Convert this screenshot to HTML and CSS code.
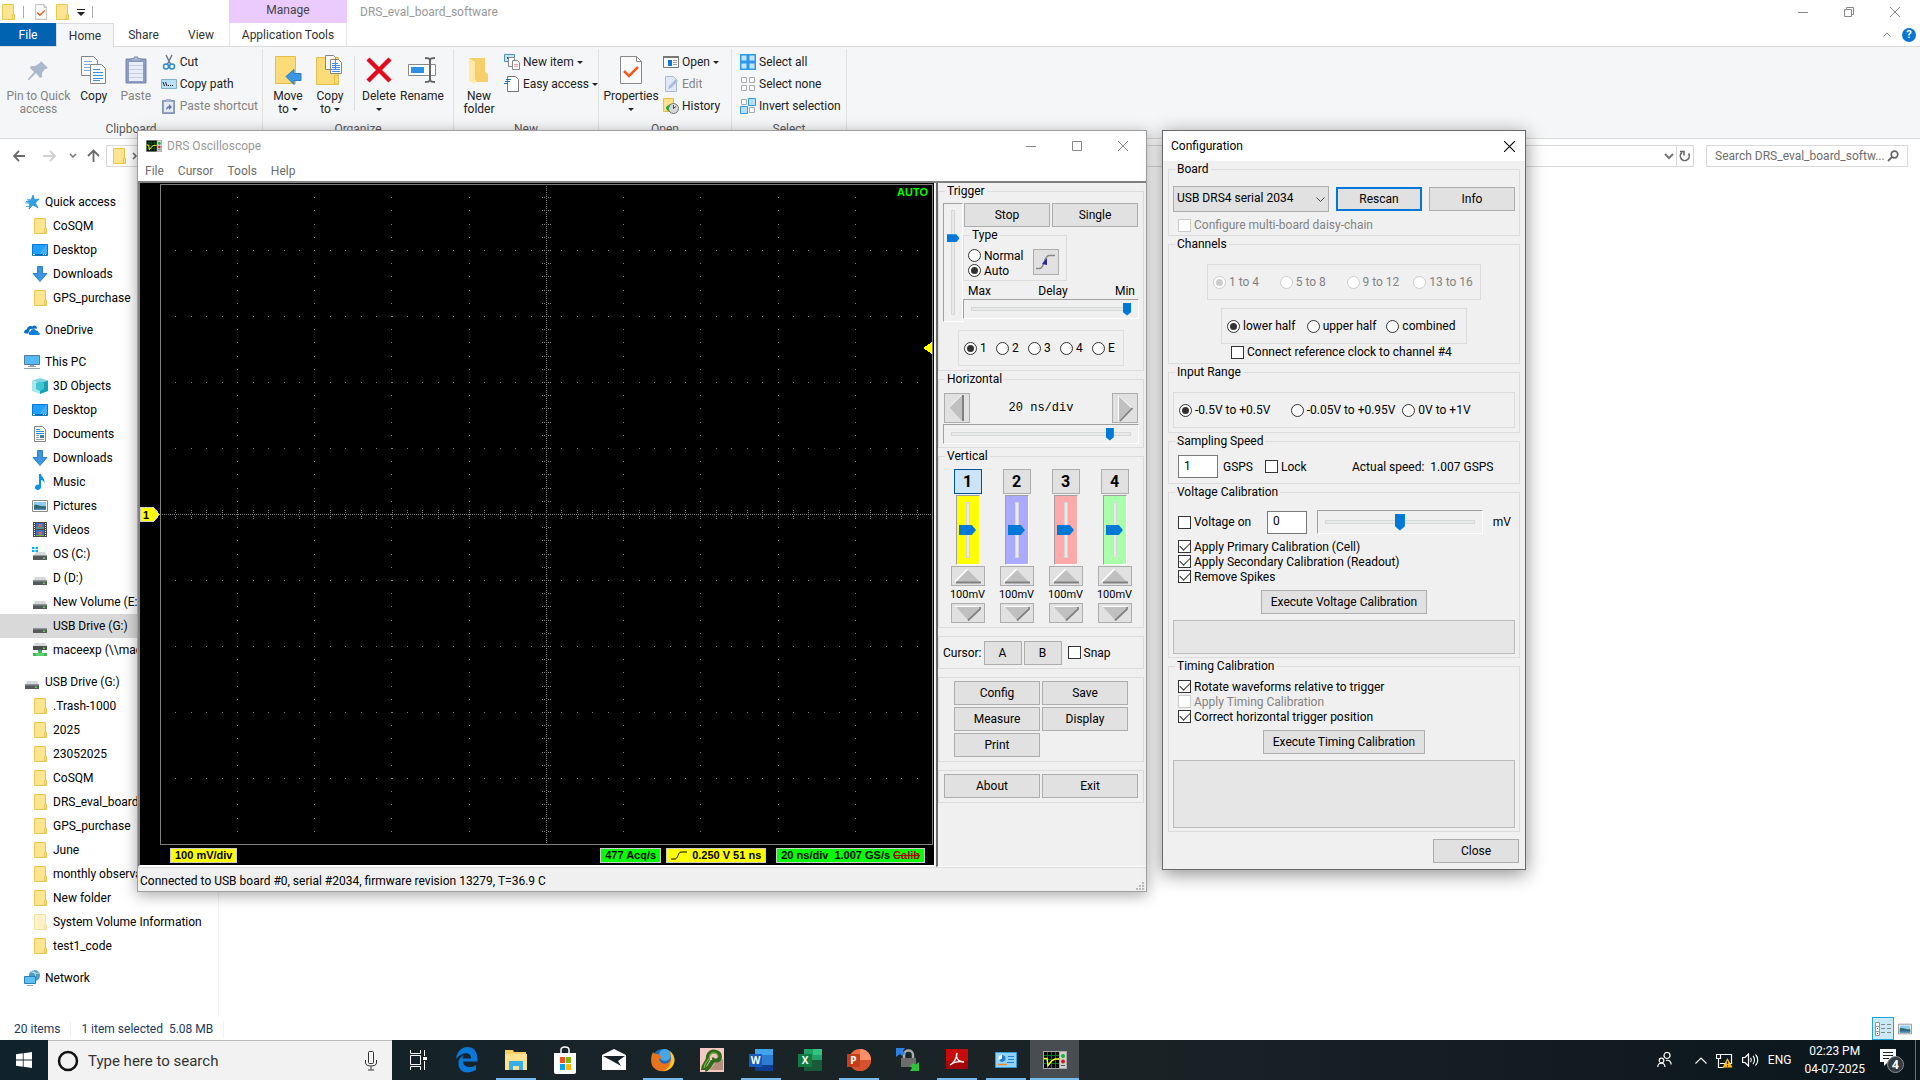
FILE: index.html
```html
<!DOCTYPE html>
<html lang="en">
<head>
    <meta charset="UTF-8">
    <meta name="viewport" content="width=device-width, initial-scale=1.0">
    <title>DRS Oscilloscope</title>
    <link rel="stylesheet" href="styles.css">
</head>
<body>
    <!-- shared icons -->
    <svg class="sprite" aria-hidden="true">
        <symbol id="i-folder" viewBox="0 0 16 16">
            <path d="M2.5 .5h11v11h1v4h-12z" fill="#ffe591" stroke="#e9c650"/>
            <path d="M12.5 15V10.500h2V15z" fill="#ffe591" stroke="#e9c650"/>
        </symbol>
        <symbol id="i-desktop" viewBox="0 0 16 16">
            <path d="M.5 2.500h15v11H.5z" fill="#1ea0fc" stroke="#0a78cf"/>
            <path d="M6 13L14 3h1v10z" fill="#3fb0ff"/>
            <path d="M1 12.500h14" stroke="#0a66b5"/>
            <path d="M1 12.500h2M11 12.500h1M13 12.500h1" stroke="#fff"/>
        </symbol>
        <symbol id="i-download" viewBox="0 0 16 16">
            <path d="M5.500 .5h5v7h4.500L8 15.500 1 7.500h4.500z" fill="#3b97e3" stroke="#2f80c8"/>
        </symbol>
        <symbol id="i-drive" viewBox="0 0 16 16">
            <path d="M3 7h10l2 4H1z" fill="#d6d9db"/>
            <path d="M1 10.500h14V15H1z" fill="#55595c"/>
            <path d="M1 10.500h14v1H1z" fill="#8b8f92"/>
            <path d="M11 12.500h2v1.500h-2z" fill="#4fe04a"/>
        </symbol>
        <symbol id="i-osdrive" viewBox="0 0 16 16">
            <path d="M4 6h9l2 4H1z" fill="#d6d9db"/>
            <path d="M1 9.500h14V14H1z" fill="#55595c"/>
            <path d="M11 11.500h2V13h-2z" fill="#4fe04a"/>
            <path d="M0 1h2.500v2H0zM3.500 1H6v2H3.500zM0 4h2.500v2H0zM3.500 4H6v2H3.500z" fill="#00b0f5"/>
        </symbol>
        <symbol id="i-netdrive" viewBox="0 0 16 16">
            <path d="M3 1h10l2 3H1z" fill="#d6d9db"/>
            <path d="M1 4h14v4H1z" fill="#484c4f"/>
            <path d="M11 5.500h2V7h-2z" fill="#4fe04a"/>
            <path d="M6 8h4v3h5v3H1v-3h5z" fill="#3fb45c"/>
            <path d="M4 11h8v3H4z" fill="#5fd06e"/>
        </symbol>
        <symbol id="i-star" viewBox="0 0 16 16">
            <path d="M9 1l1.500 4.500L15 5l-3.500 4L14 14l-5-3-4 4 .8-5L2 7.500 7 6z" fill="#2e9fe6" stroke="#1b7fc4" stroke-width=".6"/>
            <path d="M3 5.500h4M1 9h4M2 12.500h3" stroke="#6bb8e8"/>
        </symbol>
        <symbol id="i-cloud" viewBox="0 0 16 16">
            <path d="M0 10.500C0 8 2 7.500 3 7.500 3 4.500 6 3 8.500 4.500 10 2.500 13 4 13 6.500L6 7l-2 4.500H1.500z" fill="#0b6cc4"/>
            <path d="M6.500 13C4 13 4 9.500 6.500 9.300 7 6.500 11 6 12 8.500 14 8 14.500 10 14.300 10.300 16.500 10.500 16 13 14.500 13z" fill="#0f7fe0"/>
        </symbol>
        <symbol id="i-pc" viewBox="0 0 16 16">
            <path d="M.5 1.500h15v9H.5z" fill="#55b9f5" stroke="#5b7a92"/>
            <path d="M6 11h4v1.500H6z" fill="#8da5b5"/>
            <path d="M4 12.500h8M0 14.500h16" stroke="#8da5b5"/>
        </symbol>
        <symbol id="i-cube" viewBox="0 0 16 16">
            <path d="M8 0l8 2.500L8 5 0 2.500z" fill="#7fd6df"/>
            <path d="M0 2.500L8 5v11l-8-3z" fill="#a5e7ec"/>
            <path d="M16 2.500L8 5v11l8-3z" fill="#12a3b4"/>
            <path d="M4 5l4-1.500L12 5v6l-4 2-4-2z" fill="#43c5d1"/>
        </symbol>
        <symbol id="i-doc" viewBox="0 0 16 16">
            <path d="M2.500 .5h8l3 3v12h-11z" fill="#fff" stroke="#868686"/>
            <path d="M4 3.500h4M4 5.500h8M4 7.500h8" stroke="#2a8ad4"/>
            <path d="M4 9.500h3M4 11.500h3M4 13.500h8" stroke="#999"/>
            <path d="M8 9h4v3H8z" fill="#3e7f9c"/>
        </symbol>
        <symbol id="i-music" viewBox="0 0 16 16">
            <path d="M7 0h2c0 3 4 3.500 3.500 9-.7-2-2-3-3.500-3v7c0 3.500-6 4-6 .8C3 11 5.500 10 7 11z" fill="#0a93ee"/>
        </symbol>
        <symbol id="i-picture" viewBox="0 0 16 16">
            <path d="M.5 2.500h15v11H.5z" fill="#fff" stroke="#8a8a8a"/>
            <path d="M2 4h12v8H2z" fill="#8ecbf5"/>
            <path d="M2 7c4-1 6 2 12 1v4H2z" fill="#2f6a72"/>
            <path d="M2 10.500h12V12H2z" fill="#4c86b5"/>
        </symbol>
        <symbol id="i-video" viewBox="0 0 16 16">
            <path d="M1 0h14v15H1z" fill="#4a4a4a"/>
            <path d="M4 1h8v6H4z" fill="#3a6fd0"/>
            <path d="M4 8h8v6H4z" fill="#3a6fd0"/>
            <path d="M7 2h3v3H6z M6 10l4-1v4H7z" fill="#d06a3a"/>
            <path d="M4 6h8M4 13.500h8" stroke="#6bb548"/>
            <path d="M2.500 1v14M13.500 1v14" stroke="#eee" stroke-dasharray="1 1"/>
        </symbol>
        <symbol id="i-network" viewBox="0 0 16 16">
            <circle cx="10.500" cy="5.500" r="5.500" fill="#4d9cc0"/>
            <path d="M7 2c3 0 5 2 8 1M9 0c3 4 3 7 1 11" stroke="#c9e8f2" fill="none"/>
            <path d="M.5 6.500h11v7H.5z" fill="#5cc0f8" stroke="#2f7fb5"/>
            <path d="M3 15.500h6" stroke="#8da5b5"/>
        </symbol>
        <symbol id="i-scope" viewBox="0 0 24 18">
            <path d="M0 0h24v18H0z" fill="#a8a8a8"/>
            <path d="M1 1h15v16H1z" fill="#000"/>
            <path d="M1 4.500h15M1 8.500h15M1 12.500h15M4.500 1v16M8.500 1v16M12.500 1v16" stroke="#0a7a18"/>
            <path d="M1 7.500h3l1 7 4-5 3-1.500h4" stroke="#ffff28" fill="none" stroke-width="1.400"/>
            <path d="M17 1h6v16h-6z" fill="#d0d0d0"/>
            <circle cx="20" cy="5" r="2" fill="#18b030"/>
            <circle cx="20" cy="10.500" r="2" fill="#d81818"/>
            <path d="M18 14.500h4" stroke="#555"/>
        </symbol>
        <symbol id="i-props" viewBox="0 0 22 28">
            <path d="M.5 .5h16l5 5v22H.5z" fill="#fafafa" stroke="#888"/>
            <path d="M16.500 .5v5h5" fill="none" stroke="#888"/>
            <path d="M4 15l5 5 9-9" fill="none" stroke="#f4581c" stroke-width="2.500"/>
        </symbol>
        <symbol id="i-pages" viewBox="0 0 26 28">
            <path d="M.5 .5h12l4 4v15H.5z" fill="#fdfdfd" stroke="#858585"/>
            <path d="M3 5.500h8M3 8.500h10M3 11.500h6M3 14.500h6" stroke="#79aee6"/>
            <path d="M9.500 8.500h11l4 4v15h-15z" fill="#fdfdfd" stroke="#858585"/>
            <path d="M12 13.500h7M12 16.500h10M12 19.500h10M12 22.500h10M12 24.500h7" stroke="#3d8fe3"/>
        </symbol>
        <symbol id="i-min" viewBox="0 0 10 10"><path d="M0 5.500h10" stroke="currentColor"/></symbol>
        <symbol id="i-max" viewBox="0 0 10 10"><path d="M.5 .5h9v9h-9z" fill="none" stroke="currentColor"/></symbol>
        <symbol id="i-close" viewBox="0 0 10 10"><path d="M0 0l10 10M10 0L0 10" stroke="currentColor"/></symbol>
        <symbol id="i-restore" viewBox="0 0 10 10"><path d="M.5 2.500h7v7h-7zM2.500 2.500v-2h7v7h-2" fill="none" stroke="currentColor"/></symbol>
        <symbol id="i-up" viewBox="0 0 28 16">
            <path d="M2 14L14 2l12 12z" fill="#c0c0c0"/>
            <path d="M1.500 14v-1L13.500 1" stroke="#fff" stroke-width="1.500" fill="none"/>
            <path d="M2 14.500h25" stroke="#808080" stroke-width="2"/>
        </symbol>
        <symbol id="i-down" viewBox="0 0 28 16">
            <path d="M2 2h24L14 15z" fill="#c0c0c0"/>
            <path d="M1 1.500h25" stroke="#fff"/>
            <path d="M26 2v2L14 15.500" stroke="#808080" stroke-width="1.800" fill="none"/>
        </symbol>
    </svg>

    <main class="explorer">
        <header class="explorer-title">
            <div class="quickbar">
                <svg width="16" height="16"><use href="#i-folder"/></svg>
                <i class="bar"></i>
                <svg width="12" height="16"><use href="#i-props"/></svg>
                <svg width="16" height="16"><use href="#i-folder"/></svg>
                <svg width="8" height="8" viewBox="0 0 8 8"><path d="M0 1h8v1H0zM0 4h8L4 8z" fill="#222"/></svg>
                <i class="bar"></i>
            </div>
            <div class="manage">Manage</div>
            <div class="explorer-name">DRS_eval_board_software</div>
            <div class="explorer-controls">
                <button aria-label="Minimize"><svg width="10" height="10"><use href="#i-min"/></svg></button>
                <button aria-label="Restore"><svg width="10" height="10"><use href="#i-restore"/></svg></button>
                <button aria-label="Close"><svg width="10" height="10"><use href="#i-close"/></svg></button>
            </div>
        </header>

        <nav class="tabs">
            <button class="tab tab-file">File</button>
            <button class="tab tab-home">Home</button>
            <button class="tab tab-share">Share</button>
            <button class="tab tab-view">View</button>
            <button class="tab tab-tools">Application Tools</button>
            <span class="tab-end">
                <svg width="8" height="5" viewBox="0 0 8 5"><path d="M.5 4.500L4 1l3.500 3.500" fill="none" stroke="#888"/></svg>
                <button class="help" aria-label="Help">?</button>
            </span>
        </nav>

        <section class="ribbon">
            <div class="group group-clipboard">
                <div class="group-body">
                    <button class="big wide off">
                        <svg width="28" height="28" viewBox="0 0 28 28"><path d="M17 5l7 7-2 1-1 0-3 4 0 4-2 1-4-5-7 7-1 0 0-1 6-7-4-4 1-2 4 0 5-3z" fill="#a9b8cf"/></svg>
                        <span>Pin to Quick<br>access</span>
                    </button>
                    <button class="big">
                        <svg width="26" height="28"><use href="#i-pages"/></svg>
                        <span>Copy</span>
                    </button>
                    <button class="big off">
                        <svg width="22" height="28" viewBox="0 0 22 28"><path d="M1 3h20v24H1z" fill="#8b9cc0" stroke="#7587ad"/><path d="M4 6h14v19H4z" fill="#e8eef8"/><path d="M6 5V2.500h3V1h4v1.500h3V5z" fill="#aab6cd" stroke="#8594b4"/><path d="M4 9.500h14M4 13.500h14M4 17.500h14M4 21.500h14" stroke="#c5d0e4"/></svg>
                        <span>Paste</span>
                    </button>
                    <div class="smalls">
                        <button class="small">
                            <svg width="16" height="16" viewBox="0 0 16 16"><path d="M5 1l5 10M11 1L6 11" stroke="#6b7b88" stroke-width="1.500"/><circle cx="5" cy="12.500" r="2.500" fill="none" stroke="#2e8fd4" stroke-width="1.500"/><circle cx="11" cy="12.500" r="2.500" fill="none" stroke="#2e8fd4" stroke-width="1.500"/></svg>
                            Cut</button>
                        <button class="small">
                            <svg width="16" height="16" viewBox="0 0 16 16"><path d="M.5 3.500h15v9H.5z" fill="#b9e1f8" stroke="#7fb0cc"/><path d="M2 6l1.500 4M4.500 6L6 10" stroke="#222"/><path d="M7 9.500h6" stroke="#222" stroke-dasharray="1 1"/></svg>
                            Copy path</button>
                        <button class="small off">
                            <svg width="16" height="16" viewBox="0 0 16 16"><path d="M1.500 2.500h12v13h-12z" fill="#93a4c6" stroke="#8193b6"/><path d="M3 4h9v10H3z" fill="#e4eaf5"/><path d="M5 1h5v3H5z" fill="#a7b3cb"/><path d="M5 12c0-3 2-4 3-4V6l3 3-3 3v-2c-1 0-2 1-3 2z" fill="#5f78a8"/></svg>
                            Paste shortcut</button>
                    </div>
                </div>
                <div class="group-name">Clipboard</div>
            </div>
            <div class="group group-organize">
                <div class="group-body">
                    <button class="big">
                        <svg width="28" height="28" viewBox="0 0 28 28"><path d="M1.500 .5h20v27h-20z" fill="#fbdc78" stroke="#e4be48"/><path d="M12 20.500l8-7v4h7v7h-7v4z" fill="#3b97e3" stroke="#2b7cc4"/></svg>
                        <span>Move<br>to <i class="caret"></i></span>
                    </button>
                    <button class="big">
                        <svg width="28" height="30" viewBox="0 0 28 30"><path d="M.5 2.500h22v27H.5z" fill="#fbdc78" stroke="#e4be48"/><path d="M18.500 29V20h4v9z" fill="#fbdc78" stroke="#e4be48"/><path d="M9.500 .5h8l2 2v12h-10zM14.500 4.500h8l3 3v11h-11z" fill="#fdfdfd" stroke="#858585"/><path d="M16 8.500h6M16 10.500h8M16 12.500h8M16 14.500h8M16 16.500h8" stroke="#3d8fe3"/></svg>
                        <span>Copy<br>to <i class="caret"></i></span>
                    </button>
                    <i class="split"></i>
                    <button class="big">
                        <svg width="26" height="28" viewBox="0 0 26 28"><path d="M2 3l22 22M24 3L2 25" stroke="#e00b1c" stroke-width="4.500"/></svg>
                        <span>Delete</span>
                        <i class="caret"></i>
                    </button>
                    <button class="big">
                        <svg width="28" height="28" viewBox="0 0 28 28"><path d="M.5 8.500h27v11H.5z" fill="#fff" stroke="#888"/><path d="M3 11h13v6H3z" fill="#2a8fe6"/><path d="M17 2c3 0 5 0 5 3v18c0 3-2 3-5 3M27 2c-3 0-5 0-5 3v18c0 3 2 3 5 3" fill="none" stroke="#666" stroke-width="2"/></svg>
                        <span>Rename</span>
                    </button>
                </div>
                <div class="group-name">Organize</div>
            </div>
            <div class="group group-new">
                <div class="group-body">
                    <button class="big">
                        <svg width="22" height="28" viewBox="0 0 22 28"><path d="M1 2h16v14l3 2v8H8z" fill="#f6cf6a"/><path d="M1 2l6 4v22l-6-3z" fill="#ffe9a8"/></svg>
                        <span>New<br>folder</span>
                    </button>
                    <div class="smalls">
                        <button class="small">
                            <svg width="16" height="16" viewBox="0 0 16 16"><path d="M.5 .5h10v7H.5z" fill="#c4e6f8" stroke="#4a94c0"/><path d="M3 3h3v2H3z" fill="#357"/><path d="M4.500 3.500h6v9h-6z" fill="#fff" stroke="#888"/><path d="M8.500 6.500h5l2 2v7h-7z" fill="#fff" stroke="#888"/><path d="M10 10.500h4M10 12.500h4" stroke="#e09a9a"/></svg>
                            New item <i class="caret"></i></button>
                        <button class="small">
                            <svg width="16" height="16" viewBox="0 0 16 16"><path d="M3.500 .5h8l3 3v12h-11z" fill="#fff" stroke="#777"/><path d="M2 3.500h5M1 5.500h5M0 7.500h4" stroke="#1d6fb0"/></svg>
                            Easy access <i class="caret"></i></button>
                    </div>
                </div>
                <div class="group-name">New</div>
            </div>
            <div class="group group-open">
                <div class="group-body">
                    <button class="big props">
                        <svg width="22" height="28"><use href="#i-props"/></svg>
                        <span>Properties</span>
                        <i class="caret"></i>
                    </button>
                    <div class="smalls">
                        <button class="small">
                            <svg width="16" height="16" viewBox="0 0 16 16"><path d="M.5 2.500h15v11H.5z" fill="#fff" stroke="#777"/><path d="M0 2h16v2H0z" fill="#777"/><path d="M5 6h4v6H5z" fill="#0a78d8"/><path d="M10 6.500h4M10 8.500h4M10 10.500h4" stroke="#999"/></svg>
                            Open <i class="caret"></i></button>
                        <button class="small off">
                            <svg width="16" height="16" viewBox="0 0 16 16"><path d="M2.500 .5h8l3 3v12h-11z" fill="#dfe9f8" stroke="#a8b9d8"/><path d="M5 13l1-3 7-7 2 2-7 7z" fill="#a9bcdf"/></svg>
                            Edit</button>
                        <button class="small">
                            <svg width="16" height="16" viewBox="0 0 16 16"><path d="M.5 .5h10v13H.5z" fill="#fde08a" stroke="#e4be48"/><circle cx="10.500" cy="10.500" r="5" fill="#d5d8da" stroke="#777"/><path d="M10 10.500l3-2M10.500 7v4" stroke="#555"/><path d="M3 9l4-3v2c-2 2-2 4 0 6-3-1-4-3-4-5z" fill="#1fa83a"/></svg>
                            History</button>
                    </div>
                </div>
                <div class="group-name">Open</div>
            </div>
            <div class="group group-select">
                <div class="group-body">
                    <div class="smalls">
                        <button class="small">
                            <svg width="16" height="16" viewBox="0 0 16 16"><path d="M0 0h16v16H0z" fill="#2c98ea"/><path d="M1.500 1.500h5v5h-5zM9.500 1.500h5v5h-5zM1.500 9.500h5v5h-5zM9.500 9.500h5v5h-5z" fill="#c3e5fb"/></svg>
                            Select all</button>
                        <button class="small">
                            <svg width="16" height="16" viewBox="0 0 16 16"><path d="M1.500 1.500h5v5h-5zM9.500 1.500h5v5h-5zM1.500 9.500h5v5h-5zM9.500 9.500h5v5h-5z" fill="#fff" stroke="#aaa"/></svg>
                            Select none</button>
                        <button class="small">
                            <svg width="16" height="16" viewBox="0 0 16 16"><path d="M1.500 1.500h5v5h-5zM9.500 9.500h5v5h-5z" fill="#fff" stroke="#aaa"/><path d="M8.500 .5h7v7h-7zM.5 8.500h7v7h-7z" fill="#b9e0fb" stroke="#2c98ea"/></svg>
                            Invert selection</button>
                    </div>
                </div>
                <div class="group-name">Select</div>
            </div>
        </section>

        <div class="addressbar">
            <svg width="90" height="14" viewBox="0 0 90 14">
                <path d="M12 7H1M6 2L1 7l5 5" fill="none" stroke="#6a6a6a" stroke-width="1.800"/>
                <path d="M30 7h11M37 2l5 5-5 5" fill="none" stroke="#d0d0d0" stroke-width="1.800"/>
                <path d="M57 5l3 3 3-3" fill="none" stroke="#777" stroke-width="1.500"/>
                <path d="M80.500 13V2M75 7l5.500-5.500L86 7" fill="none" stroke="#6a6a6a" stroke-width="1.800"/>
            </svg>
            <div class="path">
                <svg width="16" height="16"><use href="#i-folder"/></svg>
                <svg class="path-sep" width="6" height="8" viewBox="0 0 6 8"><path d="M1 1l3 3-3 3" fill="none" stroke="#666" stroke-width="1.500"/></svg>
                <svg class="path-drop" width="10" height="7" viewBox="0 0 10 7"><path d="M1 1l4 4 4-4" fill="none" stroke="#777" stroke-width="2"/></svg>
                <span class="refresh"><svg width="12" height="12" viewBox="0 0 12 12"><path d="M3 2.500A4.500 4.500 0 1 0 9.500 3.500M1 1.500h4v4" fill="none" stroke="#666" stroke-width="1.600"/></svg></span>
            </div>
            <div class="search">
                <input type="text" aria-label="Search folder" placeholder="Search DRS_eval_board_softw...">
                <svg width="12" height="12" viewBox="0 0 12 12"><circle cx="7.500" cy="4.500" r="3.300" fill="none" stroke="#666" stroke-width="1.700"/><path d="M5 7l-4 4" stroke="#666" stroke-width="1.800"/></svg>
            </div>
        </div>

        <div class="explorer-body">
            <ul class="tree">
                <li class="root"><a href="#"><svg width="16" height="16"><use href="#i-star"/></svg>Quick access</a></li>
                <li><a href="#"><svg width="16" height="16"><use href="#i-folder"/></svg>CoSQM</a></li>
                <li><a href="#"><svg width="16" height="16"><use href="#i-desktop"/></svg>Desktop</a></li>
                <li><a href="#"><svg width="16" height="16"><use href="#i-download"/></svg>Downloads</a></li>
                <li><a href="#"><svg width="16" height="16"><use href="#i-folder"/></svg>GPS_purchase</a></li>
                <li class="root"><a href="#"><svg width="16" height="16"><use href="#i-cloud"/></svg>OneDrive</a></li>
                <li class="root"><a href="#"><svg width="16" height="16"><use href="#i-pc"/></svg>This PC</a></li>
                <li><a href="#"><svg width="16" height="16"><use href="#i-cube"/></svg>3D Objects</a></li>
                <li><a href="#"><svg width="16" height="16"><use href="#i-desktop"/></svg>Desktop</a></li>
                <li><a href="#"><svg width="16" height="16"><use href="#i-doc"/></svg>Documents</a></li>
                <li><a href="#"><svg width="16" height="16"><use href="#i-download"/></svg>Downloads</a></li>
                <li><a href="#"><svg width="16" height="16"><use href="#i-music"/></svg>Music</a></li>
                <li><a href="#"><svg width="16" height="16"><use href="#i-picture"/></svg>Pictures</a></li>
                <li><a href="#"><svg width="16" height="16"><use href="#i-video"/></svg>Videos</a></li>
                <li><a href="#"><svg width="16" height="16"><use href="#i-osdrive"/></svg>OS (C:)</a></li>
                <li><a href="#"><svg width="16" height="16"><use href="#i-drive"/></svg>D (D:)</a></li>
                <li><a href="#"><svg width="16" height="16"><use href="#i-drive"/></svg>New Volume (E:)</a></li>
                <li class="selected"><a href="#"><svg width="16" height="16"><use href="#i-drive"/></svg>USB Drive (G:)</a></li>
                <li><a href="#"><svg width="16" height="16"><use href="#i-netdrive"/></svg>maceexp (\\mac</a></li>
                <li class="root"><a href="#"><svg width="16" height="16"><use href="#i-drive"/></svg>USB Drive (G:)</a></li>
                <li><a href="#"><svg width="16" height="16"><use href="#i-folder"/></svg>.Trash-1000</a></li>
                <li><a href="#"><svg width="16" height="16"><use href="#i-folder"/></svg>2025</a></li>
                <li><a href="#"><svg width="16" height="16"><use href="#i-folder"/></svg>23052025</a></li>
                <li><a href="#"><svg width="16" height="16"><use href="#i-folder"/></svg>CoSQM</a></li>
                <li><a href="#"><svg width="16" height="16"><use href="#i-folder"/></svg>DRS_eval_board_</a></li>
                <li><a href="#"><svg width="16" height="16"><use href="#i-folder"/></svg>GPS_purchase</a></li>
                <li><a href="#"><svg width="16" height="16"><use href="#i-folder"/></svg>June</a></li>
                <li><a href="#"><svg width="16" height="16"><use href="#i-folder"/></svg>monthly observa</a></li>
                <li><a href="#"><svg width="16" height="16"><use href="#i-folder"/></svg>New folder</a></li>
                <li class="hidden-item"><a href="#"><svg width="16" height="16"><use href="#i-folder"/></svg>System Volume Information</a></li>
                <li><a href="#"><svg width="16" height="16"><use href="#i-folder"/></svg>test1_code</a></li>
                <li class="root"><a href="#"><svg width="16" height="16"><use href="#i-network"/></svg>Network</a></li>
            </ul>
        </div>

        <footer class="explorer-status">
            <span class="status-count">20 items</span>
            <span class="status-sel">1 item selected&nbsp; 5.08 MB</span>
            <span class="views">
                <button class="view active" aria-label="Details"><svg width="16" height="14" viewBox="0 0 16 14"><path d="M.5 .5h4v13h-4zM.5 4.500h4M.5 9.500h4" fill="#fff" stroke="#999"/><path d="M6 2.500h4M12 2.500h4M6 6.500h4M12 6.500h4M6 10.500h4M12 10.500h4" stroke="#888"/><path d="M2 11h1v1H2z" fill="#d22"/><path d="M2 6h1v1H2z" fill="#28c"/></svg></button>
                <button class="view" aria-label="Large icons"><svg width="14" height="14" viewBox="0 0 16 16"><use href="#i-picture"/></svg></button>
            </span>
        </footer>
    </main>

    <section class="window scope">
        <header class="scope-title">
            <svg width="16" height="12"><use href="#i-scope"/></svg>
            <h1>DRS Oscilloscope</h1>
            <div class="controls">
                <button aria-label="Minimize"><svg width="10" height="10"><use href="#i-min"/></svg></button>
                <button aria-label="Maximize"><svg width="10" height="10"><use href="#i-max"/></svg></button>
                <button aria-label="Close"><svg width="10" height="10"><use href="#i-close"/></svg></button>
            </div>
        </header>
        <nav class="menu">
            <button>File</button>
            <button>Cursor</button>
            <button>Tools</button>
            <button>Help</button>
        </nav>
        <div class="scope-body">
            <div class="screen">
                <svg class="grid" viewBox="0 0 794 662" shape-rendering="crispEdges">
                    <path d="M20.500 1.500h772v660h-772z" fill="none" stroke="#808080"/>
                    <!-- dotted divisions -->
                    <g fill="none" stroke="#808080" stroke-dasharray="1 14.440">
                        <path d="M20 67.500h772M20 133.500h772M20 199.500h772M20 265.500h772M20 397.500h772M20 463.500h772M20 529.500h772M20 595.500h772"/>
                        <path d="M20 327.500h772M20 329.500h772M20 333.500h772M20 335.500h772"/>
                    </g>
                    <g fill="none" stroke="#808080" stroke-dasharray="1 12.200">
                        <path d="M97.500 1v660M174.500 1v660M251.500 1v660M329.500 1v660M483.500 1v660M560.500 1v660M638.500 1v660M715.500 1v660"/>
                        <path d="M402.500 1v660M404.500 1v660M408.500 1v660M410.500 1v660"/>
                    </g>
                    <path d="M20 331.500h772M406.500 1v660" fill="none" stroke="#808080" stroke-dasharray="1 1"/>
                    <path d="M783 165l9-6v12z" fill="#ff0"/>
                    <path d="M0 324.500h13.500l6 7-6 7H0z" fill="#ff0" stroke="#ccc"/>
                    <text x="3" y="336" class="marker">1</text>
                    <text x="788" y="13" class="auto" text-anchor="end">AUTO</text>
                </svg>
                <div class="readouts">
                    <span class="tag yellow">100 mV/div</span>
                    <span class="tag green acq">477 Acq/s</span>
                    <span class="tag yellow"><svg width="16" height="9" viewBox="0 0 16 9"><path d="M0 8h4c3 0 3-7 6-7h6" fill="none" stroke="#000"/></svg> 0.250 V 51 ns</span>
                    <span class="tag green last">20 ns/div&nbsp; 1.007 GS/s <s>Calib</s></span>
                </div>
            </div>

            <div class="panel">
                <fieldset class="trigger">
                    <legend>Trigger</legend>
                    <div class="trigger-top">
                        <input type="range" class="slider vert level" value="25" aria-label="Trigger level">
                        <div class="trigger-main">
                            <div class="pair">
                                <button class="btn">Stop</button>
                                <button class="btn">Single</button>
                            </div>
                            <fieldset class="type">
                                <legend>Type</legend>
                                <div>
                                    <label><input type="radio" name="mode">Normal</label>
                                    <label><input type="radio" name="mode" checked>Auto</label>
                                </div>
                                <button class="btn edge" aria-label="Slope"><svg width="20" height="16" viewBox="0 0 20 16"><path d="M0 14.500h4c4 0 4-13 9-13h6" fill="none" stroke="#888" stroke-width="1.500"/><path d="M11 4v7l-5-1z" fill="#2a2a9a"/></svg></button>
                            </fieldset>
                            <div class="delay"><span>Max</span><span>Delay</span><span>Min</span></div>
                            <input type="range" class="slider" value="100" aria-label="Delay">
                        </div>
                    </div>
                    <div class="frame sources">
                        <label><input type="radio" name="src" checked>1</label>
                        <label><input type="radio" name="src">2</label>
                        <label><input type="radio" name="src">3</label>
                        <label><input type="radio" name="src">4</label>
                        <label><input type="radio" name="src">E</label>
                    </div>
                </fieldset>

                <fieldset class="horizontal">
                    <legend>Horizontal</legend>
                    <div class="timebase">
                        <button class="btn" aria-label="Slower"><svg width="18" height="28" viewBox="0 0 18 28"><path d="M1 13L14 1v26z" fill="#c0c0c0"/><path d="M1 13.500L13.500 1" stroke="#fff"/><path d="M15 1v26" stroke="#808080" stroke-width="2"/></svg></button>
                        <output>20 ns/div</output>
                        <button class="btn" aria-label="Faster"><svg width="18" height="28" viewBox="0 0 18 28"><path d="M3 1v26l13-12z" fill="#c0c0c0"/><path d="M2.500 26V1.500L16 14" stroke="#fff" fill="none"/><path d="M4 27l12.500-13" stroke="#808080" stroke-width="1.800"/></svg></button>
                    </div>
                    <input type="range" class="slider" value="90" aria-label="Horizontal position">
                </fieldset>

                <fieldset class="vertical">
                    <legend>Vertical</legend>
                    <div class="channel">
                        <button class="btn num on">1</button>
                        <input type="range" class="slider vert c1" value="50" aria-label="Offset 1">
                        <button class="btn step" aria-label="Scale up 1"><svg width="28" height="16"><use href="#i-up"/></svg></button>
                        <span>100mV</span>
                        <button class="btn step" aria-label="Scale down 1"><svg width="28" height="16"><use href="#i-down"/></svg></button>
                    </div>
                    <div class="channel">
                        <button class="btn num">2</button>
                        <input type="range" class="slider vert c2" value="50" aria-label="Offset 2">
                        <button class="btn step" aria-label="Scale up 2"><svg width="28" height="16"><use href="#i-up"/></svg></button>
                        <span>100mV</span>
                        <button class="btn step" aria-label="Scale down 2"><svg width="28" height="16"><use href="#i-down"/></svg></button>
                    </div>
                    <div class="channel">
                        <button class="btn num">3</button>
                        <input type="range" class="slider vert c3" value="50" aria-label="Offset 3">
                        <button class="btn step" aria-label="Scale up 3"><svg width="28" height="16"><use href="#i-up"/></svg></button>
                        <span>100mV</span>
                        <button class="btn step" aria-label="Scale down 3"><svg width="28" height="16"><use href="#i-down"/></svg></button>
                    </div>
                    <div class="channel">
                        <button class="btn num">4</button>
                        <input type="range" class="slider vert c4" value="50" aria-label="Offset 4">
                        <button class="btn step" aria-label="Scale up 4"><svg width="28" height="16"><use href="#i-up"/></svg></button>
                        <span>100mV</span>
                        <button class="btn step" aria-label="Scale down 4"><svg width="28" height="16"><use href="#i-down"/></svg></button>
                    </div>
                </fieldset>

                <div class="frame cursor-row">
                    <span>Cursor:</span>
                    <button class="btn">A</button>
                    <button class="btn">B</button>
                    <label><input type="checkbox">Snap</label>
                </div>
                <div class="frame actions">
                    <button class="btn">Config</button>
                    <button class="btn">Save</button>
                    <button class="btn">Measure</button>
                    <button class="btn">Display</button>
                    <button class="btn">Print</button>
                </div>
                <div class="frame pair about">
                    <button class="btn">About</button>
                    <button class="btn">Exit</button>
                </div>
            </div>
        </div>
        <footer class="scope-status">
            <span>Connected to USB board #0, serial #2034, firmware revision 13279, T=36.9 C</span>
            <svg width="9" height="9" viewBox="0 0 9 9"><path d="M6 0h2v2H6zM3 3h2v2H3zM6 3h2v2H6zM0 6h2v2H0zM3 6h2v2H3zM6 6h2v2H6z" fill="#bbb"/></svg>
        </footer>
    </section>

    <section class="window config">
        <header class="config-title">
            <h2>Configuration</h2>
            <button aria-label="Close"><svg width="11" height="11" viewBox="0 0 10 10"><use href="#i-close"/></svg></button>
        </header>
        <form class="config-body">
            <fieldset class="board">
                <legend>Board</legend>
                <div class="board-row">
                    <span class="dropdown">
                        <select aria-label="Board"><option>USB DRS4 serial 2034</option></select>
                        <svg width="9" height="6" viewBox="0 0 9 6"><path d="M.5 .5l4 4 4-4" fill="none" stroke="#444"/></svg>
                    </span>
                    <button type="button" class="btn default">Rescan</button>
                    <button type="button" class="btn">Info</button>
                </div>
                <label class="off"><input type="checkbox" disabled>Configure multi-board daisy-chain</label>
            </fieldset>

            <fieldset class="channels">
                <legend>Channels</legend>
                <div class="frame four off">
                    <label><input type="radio" name="set" checked disabled>1 to 4</label>
                    <label><input type="radio" name="set" disabled>5 to 8</label>
                    <label><input type="radio" name="set" disabled>9 to 12</label>
                    <label><input type="radio" name="set" disabled>13 to 16</label>
                </div>
                <div class="frame three">
                    <label><input type="radio" name="half" checked>lower half</label>
                    <label><input type="radio" name="half">upper half</label>
                    <label><input type="radio" name="half">combined</label>
                </div>
                <label class="clock"><input type="checkbox">Connect reference clock to channel #4</label>
            </fieldset>

            <fieldset class="range">
                <legend>Input Range</legend>
                <div class="frame">
                    <label><input type="radio" name="range" checked>-0.5V to +0.5V</label>
                    <label><input type="radio" name="range">-0.05V to +0.95V</label>
                    <label><input type="radio" name="range">0V to +1V</label>
                </div>
            </fieldset>

            <fieldset class="sampling">
                <legend>Sampling Speed</legend>
                <input type="text" class="field" id="gsps" value="1">
                <label class="unit" for="gsps">GSPS</label>
                <label class="lock"><input type="checkbox">Lock</label>
                <span>Actual speed:&nbsp; 1.007 GSPS</span>
            </fieldset>

            <fieldset class="voltage">
                <legend>Voltage Calibration</legend>
                <div class="voltage-row">
                    <label><input type="checkbox">Voltage on</label>
                    <input type="text" class="field" value="0" aria-label="Voltage">
                    <input type="range" class="slider tall" value="50" aria-label="Voltage in mV">
                    <span>mV</span>
                </div>
                <div class="checks">
                    <label><input type="checkbox" checked>Apply Primary Calibration (Cell)</label>
                    <label><input type="checkbox" checked>Apply Secondary Calibration (Readout)</label>
                    <label><input type="checkbox" checked>Remove Spikes</label>
                </div>
                <button type="button" class="btn">Execute Voltage Calibration</button>
                <div class="log"></div>
            </fieldset>

            <fieldset class="timing">
                <legend>Timing Calibration</legend>
                <div class="checks">
                    <label><input type="checkbox" checked>Rotate waveforms relative to trigger</label>
                    <label class="off"><input type="checkbox" disabled>Apply Timing Calibration</label>
                    <label><input type="checkbox" checked>Correct horizontal trigger position</label>
                </div>
                <button type="button" class="btn">Execute Timing Calibration</button>
                <div class="log large"></div>
            </fieldset>
            <button type="button" class="btn done">Close</button>
        </form>
    </section>

    <footer class="taskbar">
        <button class="start" aria-label="Start"><svg width="16" height="16" viewBox="0 0 16 16"><path d="M0 2.300l6.800-1v6.300H0zM7.600 1.200L16 0v7.600H7.600zM0 8.400h6.800v6.300l-6.800-1zM7.600 8.400H16V16l-8.400-1.200z" fill="#fff"/></svg></button>
        <div class="cortana">
            <svg width="22" height="22" viewBox="0 0 22 22"><circle cx="11" cy="11" r="9" fill="none" stroke="#111" stroke-width="2.500"/></svg>
            <input type="text" aria-label="Search" placeholder="Type here to search">
            <svg width="12" height="20" viewBox="0 0 12 20"><rect x="3.500" y=".5" width="5" height="12" rx="1" fill="none" stroke="#333"/><path d="M.5 9v3c0 4 11 4 11 0V9M6 15.500v3M3 19h6" fill="none" stroke="#333"/></svg>
        </div>
        <div class="apps">
            <button class="app" aria-label="Task View"><svg width="18" height="20" viewBox="0 0 18 20"><path d="M1.500 0v3.500h10V0M1.500 20v-3.500h10V20M1.500 5.500h10v9h-10zM15.500 0v6M15.500 11v9" fill="none" stroke="#fff"/><path d="M14 7h4v3h-4z" fill="#fff"/></svg></button>
            <button class="app" aria-label="Edge"><svg width="24" height="26" viewBox="0 0 24 26"><path d="M1 12C2 4 7 0 12.500 0 19 0 23 5 22.500 14.500H8c.5 6 8 7 13 3.500v5C12 28 3 25 3.500 16 3.600 12 6 9 9 8c-1 1-1.500 2-1.500 3.500H16C16 4 7 5 1 12z" fill="#0a78d7"/></svg></button>
            <button class="app open multi" aria-label="File Explorer"><svg width="24" height="24" viewBox="0 0 24 24"><path d="M1 2h8l1 2h12v18H1z" fill="#f7cf62"/><path d="M1 6h22v16H1z" fill="#fde391"/><path d="M5 22V13h14v9h-4v-4H9v4z" fill="#36aee8"/></svg></button>
            <button class="app" aria-label="Store"><svg width="24" height="28" viewBox="0 0 24 28"><path d="M1 7h22v19q0 2-2 2H3q-2 0-2-2z" fill="#fff"/><path d="M8 8V4c0-4 8-4 8 0v4" fill="none" stroke="#fff" stroke-width="1.500"/><path d="M7 11h5v6H7z" fill="#f25022"/><path d="M13 11h5v6h-5z" fill="#7fba00"/><path d="M7 18h5v6H7z" fill="#00a4ef"/><path d="M13 18h5v6h-5z" fill="#ffb900"/></svg></button>
            <button class="app" aria-label="Mail"><svg width="24" height="24" viewBox="0 0 24 24"><path d="M0 7l12-6 12 6v15H0z" fill="#fff"/><path d="M1 8h22l-7 5 3 5-7-4z" fill="#152228"/></svg></button>
            <button class="app open" aria-label="Firefox"><svg width="24" height="24" viewBox="0 0 24 24"><circle cx="12" cy="12" r="11" fill="#2369b5"/><circle cx="14" cy="7" r="6" fill="#48a6e6"/><path d="M2 4c1 2 3 2 5 2l4 3-3 2c1 5 7 6 10 3 3-3 2-8 0-11 5 3 7 9 4 14-4 8-15 8-20 2C-1 14 0 8 2 4z" fill="#e8741c"/><path d="M19 3c5 4 6 11 2 16-3 3-7 4-9 4 7-3 10-10 7-20z" fill="#fbc72e"/></svg></button>
            <button class="app" aria-label="Gecko"><svg width="24" height="24" viewBox="0 0 24 24"><path d="M0 0h24v24H0z" fill="#f4c9c4"/><path d="M10 22l6-9 7-2v11z" fill="#b58f7c"/><path d="M3 22c0-7 6-8 5-14 2-7 13-5 12 1-1 5-7 4-6 1M5 22c6-2 5-8 10-11" fill="none" stroke="#2f6b1c" stroke-width="4"/><path d="M4 20c1-8 6-7 6-13 3-4 8-2 8 2" fill="none" stroke="#7fb243" stroke-width="1.200"/></svg></button>
            <button class="app open" aria-label="Word"><svg width="24" height="22" viewBox="0 0 24 22"><path d="M6 0h18v22H6z" fill="#2b7cd3"/><path d="M6 0h18v6H6z" fill="#41a5ee"/><path d="M6 16h18v6H6z" fill="#103f91"/><path d="M0 5h13v13H0z" fill="#185abd"/><text x="6.500" y="15" text-anchor="middle" class="letter">W</text></svg></button>
            <button class="app" aria-label="Excel"><svg width="24" height="22" viewBox="0 0 24 22"><path d="M6 0h18v22H6z" fill="#21a366"/><path d="M15 0h9v6h-9z" fill="#33c481"/><path d="M6 11h18v11H6z" fill="#185c37"/><path d="M0 5h14v13H0z" fill="#107c41"/><text x="7" y="15" text-anchor="middle" class="letter">X</text></svg></button>
            <button class="app open" aria-label="PowerPoint"><svg width="24" height="22" viewBox="0 0 24 22"><circle cx="13" cy="11" r="11" fill="#ed6c47"/><path d="M13 0a11 11 0 0 1 11 11H13z" fill="#ff8f6b"/><path d="M2 11h22a11 11 0 0 1-22 0z" fill="#d35230"/><path d="M0 5h13v13H0z" fill="#c43e1c"/><text x="6.500" y="15" text-anchor="middle" class="letter">P</text></svg></button>
            <button class="app" aria-label="WinSCP"><svg width="24" height="24" viewBox="0 0 24 24"><path d="M8 11V7c0-6 9-6 9 0v4" fill="none" stroke="#aaa" stroke-width="2.500"/><path d="M5 10h15v9H5z" fill="#6c6c6c"/><path d="M0 0h9L7 3l2 2-3 3-2-2-4 3z" fill="#2e7fe6"/><path d="M23 23h-9l2-3-2-2 3-3 2 2 4-3z" fill="#2cc43a"/></svg></button>
            <button class="app open multi" aria-label="Acrobat"><svg width="22" height="22" viewBox="0 0 22 22"><path d="M0 0h22v20H0z" fill="#c80a0a"/><path d="M0 12h22v8H0z" fill="#a30707"/><path d="M4 16c4-2 7-7 7-12-2 4 1 9 7 9-6-1-10 0-14 3z" fill="none" stroke="#fff" stroke-width="1.300"/></svg></button>
            <button class="app open" aria-label="Control Panel"><svg width="22" height="18" viewBox="0 0 22 18"><path d="M.5 1.500h21v15H.5z" fill="#8fd3fb" stroke="#3a9ad9"/><circle cx="7" cy="7.500" r="3.500" fill="#fff"/><path d="M7 4a3.500 3.500 0 1 1-3 5l3-1.500z" fill="#1f80d0"/><path d="M13 5.500h6M13 8.500h6M12 11.500h7" stroke="#1f80d0"/><path d="M3 13.500h9" stroke="#f58a1f" stroke-width="1.500"/></svg></button>
            <button class="app open current" aria-label="DRS Oscilloscope"><svg width="24" height="18"><use href="#i-scope"/></svg></button>
        </div>
        <div class="tray">
            <svg width="15" height="16" viewBox="0 0 15 16"><circle cx="10" cy="3.500" r="3" fill="none" stroke="#fff" stroke-width="1.200"/><circle cx="4.500" cy="8.500" r="2.300" fill="none" stroke="#fff" stroke-width="1.200"/><path d="M.8 15c0-5 7-5 7.200 0M9 8.500c3-1 5 1 5.200 4" fill="none" stroke="#fff" stroke-width="1.200"/></svg>
            <svg class="tray-up" width="12" height="7" viewBox="0 0 12 7"><path d="M.5 6.500L6 1l5.500 5.500" fill="none" stroke="#fff" stroke-width="1.200"/></svg>
            <svg width="17" height="15" viewBox="0 0 17 15"><path d="M4 1.500h11.500v9H4M.5 1.500h4v4h-4zM2.500 5.500v9h5" fill="none" stroke="#fff" stroke-width="1.200"/><path d="M11.500 5l5 9.500h-10z" fill="#fcbf18"/><path d="M11.500 8v3M11.500 12v1.500" stroke="#222" stroke-width="1.200"/></svg>
            <svg width="17" height="14" viewBox="0 0 17 14"><path d="M.6 4.500h2.500L6.500 1v12L3 9.500H.6z" fill="none" stroke="#fff" stroke-width="1.200"/><path d="M8.500 5c1 1 1 3 0 4M11 3c2 2 2 6 0 8M13.500 1.500c3 3 3 8 0 11" fill="none" stroke="#fff" stroke-width="1.100"/></svg>
            <span>ENG</span>
            <time>02:23 PM<br>04-07-2025</time>
            <svg width="26" height="26" viewBox="0 0 26 26"><path d="M1 2h16v13H9l-4 4v-4H1z" fill="#fff"/><path d="M4 5.500h10M4 8.500h10M4 11.500h6" stroke="#17232a"/><circle cx="16.500" cy="17.500" r="8" fill="#333b40" stroke="#8a9094"/><text x="16.500" y="22" text-anchor="middle" class="badge">4</text></svg>
        </div>
    </footer>
</body>
</html>
```

FILE: styles.css
```css
* {
    box-sizing: border-box;
}

body {
    margin: 0;
    height: 100vh;
    display: flex;
    flex-direction: column;
    overflow: hidden;
    background: #fff;
    color: #000;
    font: 12px/16px Roboto, sans-serif;
}

button, input, select {
    font: inherit;
    color: inherit;
    margin: 0;
}

button {
    padding: 0;
    border: none;
    background: none;
}

h1, h2 {
    margin: 0;
    font-size: 12px;
    font-weight: normal;
}

svg {
    display: block;
    flex: none;
}

.sprite {
    position: absolute;
    width: 0;
    height: 0;
}

.off {
    color: #838383;
}

/* explorer */
.explorer {
    flex: 1;
    min-height: 0;
    display: flex;
    flex-direction: column;
}

.explorer-title {
    display: flex;
    height: 23px;
    color: #999;
}

.quickbar {
    display: flex;
    align-items: center;
    gap: 7px;
    width: 229px;
}

.bar {
    width: 1px;
    height: 12px;
    background: #aaa;
    margin-right: 4px;
}

.manage {
    width: 118px;
    background: #ebcbfd;
    color: #444;
    text-align: center;
    line-height: 20px;
}

.explorer-name {
    flex: 1;
    padding-left: 13px;
    line-height: 24px;
}

.explorer-controls, .controls {
    display: flex;
}

.explorer-controls button, .controls button {
    display: flex;
    align-items: center;
    justify-content: center;
    width: 46px;
    color: #888;
}

.explorer-controls {
    margin-right: 2px;
}

.tabs {
    display: flex;
    height: 24px;
    border-bottom: 1px solid #dadbdc;
    color: #333;
}

.tab-file {
    width: 56px;
    background: #0063b1;
    color: #fff;
}

.tab-home {
    width: 58px;
    height: 24px;
    border: 1px solid #dadbdc;
    border-bottom: none;
    background: #f5f6f7;
}

.tab-share {
    width: 59px;
}

.tab-view {
    width: 56px;
}

.tab-tools {
    width: 118px;
    border: 1px solid #e4e4e4;
    border-width: 0 1px;
}

.tab-end {
    margin-left: auto;
    margin-right: 4px;
    display: flex;
    align-items: center;
    gap: 11px;
}

.help {
    width: 14px;
    height: 14px;
    border-radius: 50%;
    background: #0b74d6;
    color: #fff;
    font-size: 11px;
    font-weight: bold;
    line-height: 14px;
}

.ribbon {
    display: flex;
    height: 92px;
    background: #f5f6f7;
    border-bottom: 1px solid #dadbdc;
    color: #222;
}

.group {
    display: flex;
    flex-direction: column;
    justify-content: space-between;
    margin: 2px 0 1px;
    border-right: 1px solid #e0e1e2;
}

.group-clipboard {
    width: 263px;
}

.group-organize {
    width: 191px;
}

.group-new {
    width: 145px;
}

.group-open {
    width: 133px;
}

.group-select {
    width: 115px;
}

.group-body {
    display: flex;
    align-items: flex-start;
    padding: 2px 4px 0;
}

.group-name {
    text-align: center;
    color: #5a5a5a;
}

.big {
    display: flex;
    flex-direction: column;
    align-items: center;
    min-width: 42px;
    padding-top: 4px;
    line-height: 13px;
}

.big svg {
    height: 30px;
    margin-bottom: 5px;
}

.big > .caret {
    margin-top: 5px;
}

.big.wide {
    width: 70px;
}

.big.props {
    width: 56px;
}

.split {
    width: 1px;
    height: 55px;
    margin: 5px 3px 0;
    background: #dcdcdc;
}

.caret {
    display: inline-block;
    border: 3px solid transparent;
    border-top: 3px solid #222;
    border-bottom: none;
    vertical-align: middle;
}

.smalls {
    display: flex;
    flex-direction: column;
    padding-left: 4px;
}

.small {
    display: flex;
    align-items: center;
    gap: 3px;
    height: 22px;
    white-space: nowrap;
}

.addressbar {
    display: flex;
    align-items: center;
    height: 34px;
    padding: 0 12px 0 13px;
}

.path {
    flex: 1;
    display: flex;
    align-items: center;
    height: 22px;
    margin: 0 12px 0 3px;
    padding-left: 4px;
    border: 1px solid #d9d9d9;
    gap: 2px;
}

.path-sep {
    margin-left: 3px;
}

.path-drop {
    margin-left: auto;
}

.refresh {
    display: flex;
    align-items: center;
    height: 20px;
    padding: 0 2px;
    border-left: 1px solid #d9d9d9;
}

.search {
    display: flex;
    align-items: center;
    width: 202px;
    height: 22px;
    padding: 0 8px;
    border: 1px solid #d9d9d9;
}

.search input, .cortana input {
    flex: 1;
    min-width: 0;
    padding: 0;
    border: none;
    background: none;
}

.search input::placeholder {
    color: #6d6d6d;
}

.explorer-body {
    flex: 1;
    min-height: 0;
}

.tree {
    width: 219px;
    height: 100%;
    margin: 0;
    padding: 9px 0 0;
    border-right: 1px solid #f2f2f2;
    list-style: none;
    overflow: hidden;
}

.tree a {
    display: flex;
    align-items: center;
    gap: 5px;
    height: 24px;
    padding-left: 32px;
    color: #000;
    text-decoration: none;
    white-space: nowrap;
}

.tree .root a {
    padding-left: 24px;
}

.tree .root {
    margin-top: 8px;
}

.tree .selected {
    background: #d9d9d9;
}

.tree .hidden-item svg {
    opacity: .5;
}

.explorer-status {
    display: flex;
    align-items: center;
    height: 23px;
    padding-left: 14px;
    color: #1e395b;
}

.status-count, .status-sel {
    padding-right: 10px;
    border-right: 1px solid #f0f0f0;
}

.status-sel {
    padding-left: 10px;
}

.views {
    display: flex;
    margin-left: auto;
    margin-right: 4px;
}

.view {
    display: flex;
    align-items: center;
    justify-content: center;
    width: 22px;
    height: 23px;
}

.view.active {
    border: 1px solid #26a0da;
    background: #cbe8f6;
}

/* windows */
.window {
    position: absolute;
    display: flex;
    flex-direction: column;
    background: #f0f0f0;
}

.scope {
    left: 137px;
    top: 130px;
    width: 1010px;
    border: 1px solid #a0a0a0;
    box-shadow: 0 3px 14px rgba(0, 0, 0, .35);
}

.scope-title {
    display: flex;
    align-items: center;
    height: 30px;
    padding-left: 8px;
    gap: 5px;
    background: #fff;
    color: #999;
}

.controls {
    margin-left: auto;
    align-self: stretch;
}

.menu {
    display: flex;
    gap: 14px;
    height: 20px;
    padding-left: 7px;
    background: #fff;
    color: #6d6d6d;
}

.scope-body {
    display: flex;
    border-top: 2px solid #808080;
}

.screen {
    flex: 1;
    display: flex;
    flex-direction: column;
    background: #000;
    border-left: 2px solid #808080;
    border-right: 1px solid #fff;
    border-bottom: 2px solid #fff;
    font: bold 11px/13px "Liberation Sans", sans-serif;
}

.grid {
    width: 100%;
}

.auto {
    fill: #0f0;
}

.readouts {
    display: flex;
    gap: 5px;
    padding: 3px 9px 2px 30px;
}

.tag {
    display: flex;
    align-items: center;
    gap: 3px;
    padding: 0 4px;
    border: 1px solid #ccc;
    white-space: nowrap;
}

.tag svg {
    margin-right: 2px;
}

.yellow {
    background: #ff0;
}

.green {
    background: #0f0;
}

.acq {
    margin-left: auto;
}

.last {
    margin-left: 5px;
}

.tag s {
    color: #b00000;
}

.panel {
    width: 210px;
    padding-right: 2px;
    margin-left: 1px;
    border-left: 2px solid #6a6a6a;
    border-bottom: 1px solid #fff;
}

fieldset {
    min-width: 0;
    margin: 0;
    padding: 0 4px;
    border: 1px solid #dcdcdc;
}

legend {
    margin-left: 2px;
    padding: 0 2px;
}

.frame {
    border: 1px solid #dcdcdc;
}

label {
    display: flex;
    align-items: center;
    gap: 3px;
    white-space: nowrap;
}

.btn {
    display: flex;
    align-items: center;
    justify-content: center;
    height: 24px;
    border: 1px solid #adadad;
    background: #e1e1e1;
}

.btn.default {
    border: 2px solid #0078d7;
}

input[type="radio"], input[type="checkbox"] {
    appearance: none;
    flex: none;
    display: flex;
    align-items: center;
    justify-content: center;
    width: 13px;
    height: 13px;
    border: 1px solid #333;
    background: #fff;
}

input[type="radio"] {
    border-radius: 50%;
}

input[type="radio"]:checked::before {
    content: "";
    width: 7px;
    height: 7px;
    border-radius: 50%;
    background: #333;
}

input[type="checkbox"]:checked::before {
    content: "";
    width: 9px;
    height: 5px;
    margin-top: -3px;
    border: 1px solid #333;
    border-width: 0 0 1px 1px;
    transform: rotate(-45deg);
}

input[type="radio"]:disabled, input[type="checkbox"]:disabled {
    border-color: #ccc;
}

input[type="radio"]:disabled::before {
    background: #ccc;
}

.slider {
    appearance: none;
    display: block;
    width: 100%;
    height: 20px;
    padding: 0 7px;
    border: 1px solid;
    border-color: #a0a0a0 #fff #fff #a0a0a0;
    background: none;
}

.slider::-webkit-slider-runnable-track {
    height: 13px;
    background: linear-gradient(#e7eaea, #e7eaea) center / calc(100% - 2px) 2px no-repeat,
        linear-gradient(#d6d6d6, #d6d6d6) center / 100% 4px no-repeat;
}

.slider::-webkit-slider-thumb {
    appearance: none;
    width: 8px;
    height: 13px;
    background: #0078d7;
    clip-path: polygon(0 0, 100% 0, 100% 75%, 50% 100%, 0 75%);
}

.slider.tall {
    height: 24px;
}

.slider.tall::-webkit-slider-runnable-track {
    height: 17px;
}

.slider.tall::-webkit-slider-thumb {
    width: 10px;
    height: 17px;
}

.slider.vert {
    writing-mode: vertical-lr;
    width: 20px;
    padding: 6px 0;
}

.slider.level {
    height: 119px;
}

.slider.vert::-webkit-slider-runnable-track {
    width: 13px;
    height: 100%;
    background: linear-gradient(#e7eaea, #e7eaea) center / 2px calc(100% - 2px) no-repeat,
        linear-gradient(#d6d6d6, #d6d6d6) center / 4px 100% no-repeat;
}

.slider.vert::-webkit-slider-thumb {
    width: 13px;
    height: 8px;
    clip-path: polygon(0 0, 75% 0, 100% 50%, 75% 100%, 0 100%);
}

.pair {
    display: flex;
    gap: 2px;
}

.pair .btn {
    flex: 1;
}

.trigger {
    padding-top: 4px;
    padding-bottom: 4px;
}

.trigger-top {
    display: flex;
}

.trigger-main {
    flex: 1;
}

.trigger-main .pair {
    padding: 0 1px;
}

.type {
    display: flex;
    justify-content: space-between;
    width: 104px;
    height: 54px;
    padding: 5px 7px 0 4px;
}

.type label {
    height: 15px;
}

.edge {
    width: 26px;
    height: 26px;
    margin-top: 1px;
}

.delay {
    display: flex;
    justify-content: space-between;
    padding: 2px 4px 0 5px;
}

.sources {
    display: flex;
    gap: 8px;
    width: 166px;
    height: 36px;
    margin: 8px auto 0;
    padding: 0 5px;
}

.sources label {
    width: 24px;
}

.horizontal {
    padding-top: 6px;
    padding-bottom: 3px;
}

.timebase {
    display: flex;
    align-items: center;
    justify-content: space-between;
    padding: 0 1px;
    margin-bottom: 1px;
    font-family: "Liberation Mono", monospace;
}

.timebase .btn {
    width: 26px;
    height: 30px;
}

.vertical {
    display: flex;
    justify-content: center;
    gap: 15px;
    padding-top: 5px;
    padding-bottom: 4px;
}

.channel {
    display: flex;
    flex-direction: column;
    align-items: center;
    gap: 1px;
    width: 34px;
    font-size: 11px;
    line-height: 15px;
}

.num {
    width: 28px;
    height: 25px;
    font-size: 16px;
    font-weight: bold;
}

.num.on {
    border-color: #005499;
    background: #cce4f7;
}

.step {
    width: 34px;
    height: 20px;
}

.channel .slider {
    width: 24px;
    height: 70px;
}

.channel .slider::-webkit-slider-runnable-track {
    width: 17px;
}

.channel .slider::-webkit-slider-thumb {
    width: 17px;
    height: 10px;
}

.c1 {
    background: #ff0;
}

.c2 {
    background: #aaf;
}

.c3 {
    background: #faa;
}

.c4 {
    background: #afa;
}

.cursor-row {
    display: flex;
    align-items: center;
    gap: 2px;
    height: 33px;
    margin-top: 8px;
    padding-left: 4px;
}

.cursor-row .btn {
    width: 38px;
}

.cursor-row label {
    padding-left: 4px;
}

.actions {
    display: grid;
    grid-template-columns: 86px 86px;
    justify-content: center;
    gap: 2px;
    margin-top: 8px;
    padding: 3px 0 4px;
}

.about {
    margin-top: 8px;
    padding: 3px 5px 4px;
}

.scope-status {
    display: flex;
    align-items: center;
    justify-content: space-between;
    height: 24px;
    padding: 2px 1px 0 2px;
    border-top: 1px solid #dcdcdc;
}

.scope-status svg {
    align-self: flex-end;
}

/* configuration dialog */
.config {
    left: 1162px;
    top: 130px;
    width: 364px;
    border: 1px solid #6a6a6a;
    box-shadow: 0 4px 18px rgba(0, 0, 0, .45);
}

.config-title {
    display: flex;
    align-items: center;
    justify-content: space-between;
    height: 30px;
    padding: 0 10px 0 8px;
    background: #fff;
}

.config-body {
    padding: 0 5px 6px;
}

.board {
    padding-top: 9px;
    padding-bottom: 2px;
}

.board label, .checks label {
    padding-left: 5px;
}

.board-row {
    display: flex;
    align-items: center;
    gap: 7px;
    margin-bottom: 5px;
}

.board-row .btn {
    width: 86px;
}

.dropdown {
    position: relative;
}

.dropdown svg {
    position: absolute;
    right: 4px;
    top: 11px;
    pointer-events: none;
}

.dropdown select {
    display: block;
    appearance: none;
    width: 156px;
    height: 26px;
    padding: 0 3px 2px;
    border: 1px solid #adadad;
    border-radius: 0;
    background: #e1e1e1;
}

.channels {
    display: flex;
    flex-direction: column;
    align-items: center;
    padding-top: 12px;
    padding-bottom: 3px;
}

.channels .frame, .range .frame {
    display: flex;
    height: 36px;
    padding-left: 5px;
}

.four {
    width: 274px;
    margin-bottom: 8px;
}

.four label {
    width: 67px;
}

.three {
    width: 246px;
}

.three label {
    width: 80px;
}

.clock {
    width: 226px;
}

.range {
    padding-top: 12px;
    padding-bottom: 4px;
}

.range label {
    width: 112px;
}

.sampling {
    display: flex;
    align-items: center;
    padding-top: 6px;
    padding-bottom: 5px;
}

.field {
    width: 40px;
    height: 23px;
    padding: 0 5px 2px;
    border: 1px solid #7a7a7a;
    background: #fff;
}

.sampling .field {
    margin-left: 5px;
}

.unit {
    width: 47px;
    padding-left: 5px;
}

.lock {
    width: 87px;
}

.voltage, .timing {
    padding-top: 10px;
    padding-bottom: 3px;
}

.voltage-row {
    display: flex;
    align-items: center;
    gap: 10px;
    padding: 0 4px 0 5px;
    margin-bottom: 5px;
}

.voltage-row label {
    width: 79px;
}

.voltage-row .slider {
    flex: 1;
}

.timing {
    padding-top: 5px;
}

.checks label {
    height: 15px;
}

.checks + .btn {
    margin: 6px auto;
    padding: 0 9px;
}

.log {
    height: 34px;
    border: 1px solid #bcbcbc;
    background: #e6e6e6;
}

.log.large {
    height: 68px;
}

.done {
    width: 86px;
    margin: 7px 1px 0 auto;
}

/* taskbar */
.taskbar {
    display: flex;
    height: 40px;
    background: linear-gradient(90deg, #10222b, #1a2427 40%, #1a2226 60%, #0a161c);
    color: #fff;
}

.start {
    display: flex;
    align-items: center;
    justify-content: center;
    width: 48px;
}

.cortana {
    display: flex;
    align-items: center;
    gap: 9px;
    width: 344px;
    padding: 0 15px 0 9px;
    background: #f2f2f2;
    border-top: 1px solid #bbb;
    font-size: 15px;
}

.cortana input::placeholder {
    color: #333;
}

.apps {
    display: flex;
    margin-left: 1px;
}

.app {
    display: flex;
    align-items: center;
    justify-content: center;
    width: 49px;
    border-bottom: 2px solid transparent;
    border-top: 2px solid transparent;
}

.app.open {
    background: linear-gradient(#76b9ed, #76b9ed) bottom / 40px 2px no-repeat border-box;
}

.app.current {
    border-top-color: #474d50;
    border-bottom-color: #76b9ed;
    background: #474d50;
}

.letter {
    fill: #fff;
    font: bold 10px "Open Sans", sans-serif;
}

.badge {
    fill: #fff;
    font: bold 12px "Open Sans", sans-serif;
}

.tray {
    display: flex;
    align-items: center;
    gap: 9px;
    margin-left: auto;
    margin-right: 4px;
    padding-right: 10px;
    border-right: 1px solid #6a7276;
}

.tray-up {
    margin-left: 14px;
}

.tray time {
    margin: 0 5px 0 4px;
    text-align: center;
    line-height: 18px;
}
```
